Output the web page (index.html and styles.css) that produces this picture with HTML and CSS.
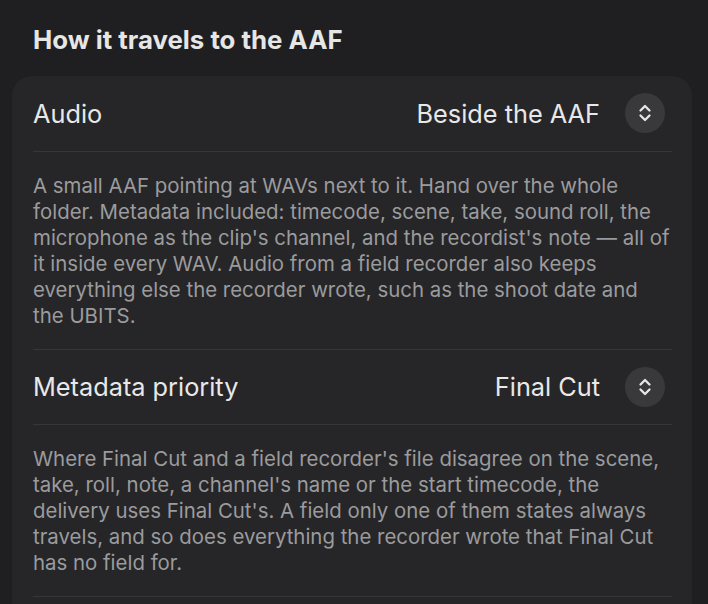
FILE: index.html
```html
<!DOCTYPE html>
<html>
<head>
    <meta charset="utf-8">
    <link rel="stylesheet" href="styles.css">
</head>
<body>
    <h2 class="section-title">How it travels to the AAF</h2>

    <div class="card">
        <div class="row">
            <span class="row_name">Audio</span>
            <div class="picker">
                <span class="picker_value">Beside the AAF</span>
                <span class="stepper">
                    <svg width="14" height="18" viewBox="0 0 14 18"><path d="M2.5 6.5 L7 2 L11.5 6.5 M2.5 11.5 L7 16 L11.5 11.5" fill="none" stroke="#e6e6e6" stroke-width="2.3" stroke-linecap="round" stroke-linejoin="round"/></svg>
                </span>
            </div>
        </div>
        <p class="note">A small AAF pointing at WAVs next to it. Hand over the whole folder. Metadata included: timecode, scene, take, sound roll, the microphone as the clip's channel, and the recordist's note — all of it inside every WAV. Audio from a field recorder also keeps everything else the recorder wrote, such as the shoot date and the UBITS.</p>

        <div class="row">
            <span class="row_name">Metadata priority</span>
            <div class="picker">
                <span class="picker_value">Final Cut</span>
                <span class="stepper">
                    <svg width="14" height="18" viewBox="0 0 14 18"><path d="M2.5 6.5 L7 2 L11.5 6.5 M2.5 11.5 L7 16 L11.5 11.5" fill="none" stroke="#e6e6e6" stroke-width="2.3" stroke-linecap="round" stroke-linejoin="round"/></svg>
                </span>
            </div>
        </div>
        <p class="note">Where Final Cut and a field recorder's file disagree on the scene, take, roll, note, a channel's name or the start timecode, the delivery uses Final Cut's. A field only one of them states always travels, and so does everything the recorder wrote that Final Cut has no field for.</p>
        <div class="row"></div>
    </div>
</body>
</html>
```

FILE: styles.css
```css
body {
    font-family: 'Inter', 'Helvetica', 'Arial', sans-serif;
    background-color: #1f1f21;
    color: #e8e8e8;
    margin: 0;
    padding: 0 16px 0 12px;
}

.section-title {
    font-size: 25.8px;
    font-weight: 700;
    line-height: 32px;
    margin: 0;
    padding: 24px 0 20px 21px;
    color: #e6e6e6;
}

/* tarjeta de opciones */
.card {
    background-color: #262628;
    border-radius: 20px;
    padding: 0 20px 0 21px;
}

.row {
    display: flex;
    align-items: center;
    justify-content: space-between;
    height: 74.5px;
    border-bottom: 1.5px solid #363638;
}

.row_name {
    font-size: 25.3px;
    color: #e8e8e8;
}

.picker {
    display: flex;
    align-items: center;
    gap: 25px;
}

.picker_value {
    font-size: 25.3px;
    color: #e8e8e8;
}

.stepper {
    width: 40px;
    height: 40px;
    border-radius: 50%;
    background-color: #39393b;
    display: flex;
    align-items: center;
    justify-content: center;
    margin-right: 7px;
}

.note {
    margin: 0;
    padding: 21px 0 20px 0;
    font-size: 20.42px;
    line-height: 26px;
    color: #9b9b9d;
    border-bottom: 1.5px solid #363638;
}
```
